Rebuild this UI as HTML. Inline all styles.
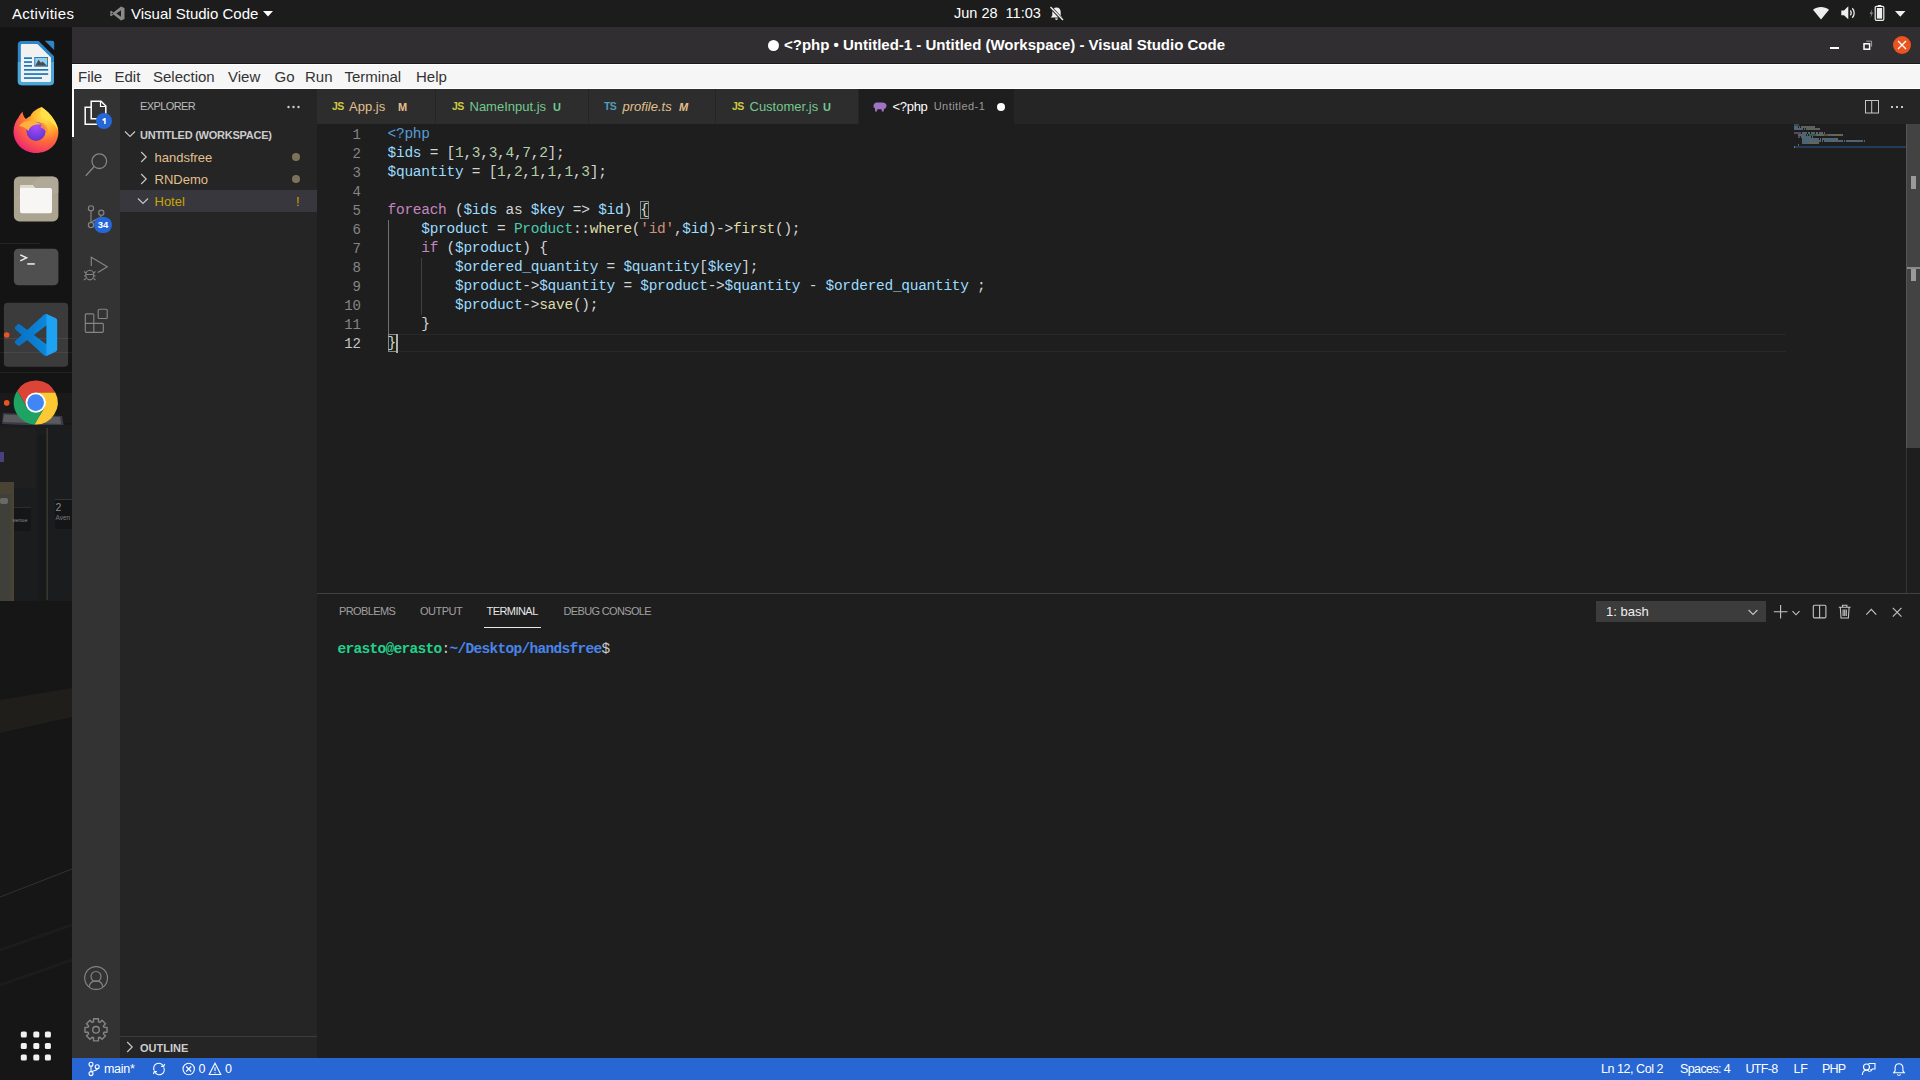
<!DOCTYPE html>
<html><head><meta charset="utf-8">
<style>
*{margin:0;padding:0;box-sizing:border-box}
html,body{width:1920px;height:1080px;overflow:hidden;background:#1e1e1e;font-family:"Liberation Sans",sans-serif}
.a{position:absolute}
.t{position:absolute;white-space:pre;line-height:1}
svg{position:absolute;overflow:visible}
#top{left:0;top:0;width:1920px;height:27px;background:#1c1c1c}
#dock{left:0;top:27px;width:72px;height:1053px;background:#151515;overflow:hidden}
#title{left:72px;top:27px;width:1848px;height:37px;background:#302e30;border-bottom:1px solid #1a1a1a}
#menu{left:72px;top:64px;width:1848px;height:25px;background:#f6f6f6;border-top:1px solid #fff;border-bottom:1px solid #fff}
#act{left:72px;top:89px;width:48px;height:969px;background:#333333}
#side{left:120px;top:89px;width:197px;height:969px;background:#252526}
#tabs{left:317px;top:89px;width:1603px;height:35px;background:#252526}
#editor{left:317px;top:124px;width:1603px;height:468px;background:#1e1e1e}
#panel{left:317px;top:593px;width:1603px;height:465px;background:#1e1e1e;border-top:1px solid #414141}
#status{left:72px;top:1058px;width:1848px;height:22px;background:#2766d3}
.tab{position:absolute;top:0;height:35px;background:#2d2d2d;border-right:1px solid #252526}
.code{position:absolute;font-family:"Liberation Mono",monospace;font-size:14.5px;letter-spacing:-0.28px;line-height:19px;white-space:pre;color:#d4d4d4}
.ln{position:absolute;font-family:"Liberation Mono",monospace;font-size:14px;line-height:19px;color:#858585;text-align:right;width:60px;white-space:pre}
.wt{color:#fff;font-size:15px}
.mn{color:#333333;font-size:15px}
.tb{font-size:13px}
.kw{color:#c586c0}.vr{color:#9cdcfe}.nm{color:#b5cea8}.fn{color:#dcdcaa}.cl{color:#4ec9b0}.st{color:#ce9178}.tg{color:#569cd6}
</style></head><body>
<!-- GNOME top bar -->
<div id="top" class="a"></div>
<div class="t wt" style="left:12px;top:6.3px;letter-spacing:0.3px">Activities</div>
<svg style="left:110px;top:6px" width="15" height="15" viewBox="0 0 15 15"><path d="M11 0.5 L14.5 2 V13 L11 14.5 L3.5 8.6 L1.3 10.3 L0.3 9.8 V5.2 L1.3 4.7 L3.5 6.4 Z M11 4.3 L6.3 7.5 L11 10.7 Z M1.8 6.2 V8.8 L3.1 7.5 Z" fill="#8a8a8a" fill-rule="evenodd"/></svg>
<div class="t wt" style="left:131px;top:6.3px">Visual Studio Code</div>
<svg style="left:263px;top:11px" width="10" height="6" viewBox="0 0 10 6"><path d="M0 0 H10 L5 5.5 Z" fill="#fff"/></svg>
<div class="t wt" style="left:954px;top:5.8px;font-size:14.5px">Jun 28  11:03</div>
<svg style="left:1049px;top:6px" width="15" height="15" viewBox="0 0 15 15"><path d="M7.5 1.5 C4.8 1.5 3.3 3.5 3.3 6 V9.5 L1.8 11.5 H13.2 L11.7 9.5 V6 C11.7 3.5 10.2 1.5 7.5 1.5 Z M6 12.6 H9 C9 13.5 8.3 14 7.5 14 C6.7 14 6 13.5 6 12.6 Z" fill="#eee"/><path d="M1 0.5 L14 14.5" stroke="#1c1c1c" stroke-width="3"/><path d="M1.5 1 L14 14" stroke="#eee" stroke-width="1.4"/></svg>
<svg style="left:1813px;top:7px" width="16" height="13" viewBox="0 0 16 13"><path d="M0 2.8 C4.5 -0.9 11.5 -0.9 16 2.8 L8 12.5 Z" fill="#eee"/></svg>
<svg style="left:1841px;top:6px" width="16" height="14" viewBox="0 0 16 14"><path d="M0.3 4.5 H3 L7.3 0.3 V13.3 L3 9.3 H0.3 Z" fill="#eee"/><path d="M9.3 4.5 C10.5 5.7 10.5 8.1 9.3 9.3" stroke="#eee" stroke-width="1.3" fill="none"/><path d="M11.3 2.2 C13.8 4.7 13.8 9.2 11.3 11.7" stroke="#eee" stroke-width="1.3" fill="none"/></svg>
<svg style="left:1869px;top:5px" width="16" height="16" viewBox="0 0 16 16"><path d="M3.3 4 L0.5 9 H2.3 L1.3 13 L4.2 7.6 H2.5 Z" fill="#888"/><rect x="6.2" y="1.3" width="8.6" height="14" rx="1.3" fill="none" stroke="#eee" stroke-width="1.2"/><rect x="8.8" y="0" width="3.5" height="1.5" fill="#eee"/><rect x="7.9" y="3" width="5.2" height="10.6" fill="#eee"/></svg>
<svg style="left:1895px;top:10.5px" width="11" height="6" viewBox="0 0 11 6"><path d="M0 0 H10.5 L5.25 5.8 Z" fill="#eee"/></svg>

<!-- Dock -->
<div id="dock" class="a">
<svg style="left:0;top:0" width="72" height="1053" viewBox="0 27 72 1053">
 <defs>
  <linearGradient id="vsg" x1="0" y1="0" x2="1" y2="0"><stop offset="0" stop-color="#0a6fc2"/><stop offset="0.7" stop-color="#0b86d8"/><stop offset="1" stop-color="#1fa0f0"/></linearGradient>
  <radialGradient id="ffg" cx="0.72" cy="0.2" r="0.95"><stop offset="0" stop-color="#ffe94a"/><stop offset="0.3" stop-color="#ffb52e"/><stop offset="0.55" stop-color="#ff6f37"/><stop offset="0.82" stop-color="#f43b62"/><stop offset="1" stop-color="#e3147f"/></radialGradient>
  <radialGradient id="ffp" cx="0.5" cy="0.25" r="0.85"><stop offset="0" stop-color="#a94dff"/><stop offset="1" stop-color="#5630c9"/></radialGradient>
  <linearGradient id="wall" x1="0" y1="0" x2="0" y2="1"><stop offset="0" stop-color="#1d2023"/><stop offset="1" stop-color="#22262a"/></linearGradient>
 </defs>
 <!-- wallpaper hints -->
 <rect x="0" y="27" width="72" height="1053" fill="#171717"/>
 <rect x="0" y="27" width="72" height="395" fill="#141414"/>
 <path d="M0 243.5 H40" stroke="#26241e" stroke-width="1"/>
 <path d="M0 338.5 H72 M0 352.5 H72 M0 372.5 H72" stroke="#24221d" stroke-width="1"/>
 <rect x="0" y="393" width="72" height="30" fill="#1a1a1a"/>
 <path d="M3 413 L62 416 L64 427 L2 424 Z" fill="#3d3a48"/>
 <path d="M4 414.5 L60 417 L61 424 L3 422 Z" fill="#5b5a5e"/>
 <rect x="0" y="425" width="72" height="176" fill="#1b1c1e"/>
 <rect x="0" y="428" width="36" height="60" fill="#1f1f20"/>
 <rect x="0" y="452" width="4" height="10" fill="#4a4080"/>
 <rect x="38" y="435" width="9" height="166" fill="#18191b"/>
 <rect x="46.5" y="428" width="1.3" height="172" fill="#4a4636" opacity="0.8"/>
 <rect x="0" y="482" width="14" height="119" fill="#4a4333"/>
 <rect x="0" y="494" width="11" height="107" fill="#3f403a"/>
 <rect x="0" y="498" width="8" height="6" rx="2" fill="#7a7c78" opacity="0.7"/>
 <rect x="14" y="507" width="17" height="24" fill="#151618"/>
 <path d="M14 507.5 H31" stroke="#444" stroke-width="0.5"/>
 <text x="12.5" y="522" font-family="Liberation Sans" font-size="5.5" fill="#8a8a8a">venue</text>
 <rect x="55" y="499" width="17" height="30" fill="#141517"/>
 <path d="M55 499.5 H72" stroke="#4a4a4a" stroke-width="0.6"/>
 <text x="55.5" y="511" font-family="Liberation Sans" font-size="10.5" fill="#8a8a8a">2</text>
 <text x="55.5" y="520" font-family="Liberation Sans" font-size="6.5" fill="#7a7a7a">Aven</text>
 <rect x="0" y="601" width="72" height="479" fill="#161616"/>
 <path d="M0 700 L72 688 V717 L0 733 Z" fill="#1f1e1a"/>
 <path d="M0 897 L72 869" stroke="#3a3a3a" stroke-width="0.8"/>
 <path d="M0 950 L72 925 M0 985 L72 960" stroke="#1c1c1c" stroke-width="3"/>
 <!-- LibreOffice Writer -->
 <path d="M21.8 41 H38.6 L54 56.2 V81.2 A4 4 0 0 1 50 85.2 H21.8 A4 4 0 0 1 17.8 81.2 V45 A4 4 0 0 1 21.8 41 Z" fill="#2c86c7"/>
 <path d="M17.8 62 V81.2 A4 4 0 0 0 21.8 85.2 H50 A4 4 0 0 0 54 81.2 V62 Z" fill="#4ba7da"/>
 <path d="M22 44 H37.4 L51 57.6 V80.5 A1.6 1.6 0 0 1 49.4 82.1 H22.5 A1.6 1.6 0 0 1 20.9 80.5 V45.1 A1.1 1.1 0 0 1 22 44 Z" fill="#f1f1f1"/>
 <path d="M44.8 40.8 H52.2 A2 2 0 0 1 54.2 42.8 V49.9 Z" fill="#2c86c7"/>
 <g fill="#1b75bb"><rect x="24" y="57.3" width="8" height="1.7"/><rect x="24" y="61.2" width="8" height="1.7"/><rect x="24" y="65" width="8" height="1.7"/><rect x="24" y="69" width="24.2" height="1.7"/><rect x="24" y="73.2" width="24.2" height="1.7"/><rect x="24" y="77.2" width="18" height="1.7"/></g>
 <rect x="34.3" y="57" width="13.7" height="9.7" fill="#1b75bb"/>
 <rect x="35.2" y="57.9" width="11.9" height="7.9" fill="#8fd0f2"/>
 <path d="M35.2 65.8 L38.5 59.8 L41 62.8 L42.5 61.5 L47.1 65.8 Z" fill="#4a4a4a"/>
 <path d="M44.6 57.9 H47.1 V60.5 Z" fill="#f3c53a"/>
 <!-- Firefox -->
 <path d="M41.5 107 C46 110 50.5 114 53.5 119 C57 124 58.5 128 58.4 132 C58.4 144.5 48.5 153 36 153 C23.5 153 13.5 143.5 13.5 131.5 C13.5 126 15.5 121 18.5 117.5 C19.5 115 21 113.5 22.5 111.5 C23 115 24 117.5 26 119 C27.5 117.5 29 116.5 30.5 116 C31.5 113 35 109.5 41.5 107 Z" fill="url(#ffg)"/>
 <path d="M41.5 107 C46 110 50.5 114 53.5 119 C56 123 57.5 127 58 130 C54 123 48 119 42 118 C40 115 40 111 41.5 107 Z" fill="#ffe24a"/>
 <circle cx="36" cy="131.3" r="9.6" fill="url(#ffp)"/>
 <path d="M19 126 C22 121.5 28 120 33 121 C37 121.8 40 123.5 42 125 C38.5 124.2 34.5 124.5 31.5 126.5 C29.5 127.8 28.8 129.5 28.5 131 C26 128 22.5 126.5 19 126 Z" fill="#ffb13b"/>
 <path d="M42 122.5 C46.5 124.5 49 129 48 135 C46.5 131 44 128.5 40.5 127.5 Z" fill="#ff9236" opacity="0.85"/>
 <!-- Files -->
 <rect x="13.9" y="176.4" width="44.5" height="45" rx="5.5" fill="#aba491"/>
 <path d="M13.9 200 L40 176.4 H52.9 A5.5 5.5 0 0 1 58.4 181.9 V193 Z" fill="#b5ae9c" opacity="0.6"/>
 <path d="M22 184.9 H32.5 L35 187.9 H50 A2 2 0 0 1 52 189.9 V211.2 A2 2 0 0 1 50 213.2 H22 A2 2 0 0 1 20 211.2 V186.9 A2 2 0 0 1 22 184.9 Z" fill="#f7f6f4"/>
 <path d="M22 184.9 H32.5 L35 187.9 H20 V186.9 A2 2 0 0 1 22 184.9 Z" fill="#deDAD0"/>
 <!-- Terminal -->
 <rect x="13.9" y="248.7" width="44.5" height="36.5" rx="4.5" fill="#4f4f4f"/>
  <path d="M20.3 254.8 L26.6 257.8 L20.3 260.8" fill="none" stroke="#f0f0f0" stroke-width="1.4"/>
 <rect x="27.3" y="263.2" width="7.5" height="1.5" fill="#f0f0f0"/>
 <!-- VS Code active -->
 <rect x="3.9" y="302.8" width="64.2" height="63.9" rx="4" fill="#ffffff" opacity="0.17"/>
 <g transform="translate(14.9 313.8) scale(0.422)">
  <path d="M96.46 10.8 L75.86 0.87 C73.48 -0.28 70.62 0.2 68.75 2.07 L29.2 38.15 L11.97 25.07 C10.37 23.85 8.12 23.95 6.63 25.31 L1.12 30.32 C-0.7 31.97 -0.7 34.83 1.11 36.48 L16.05 50.11 L1.11 63.74 C-0.7 65.39 -0.7 68.25 1.12 69.9 L6.63 74.91 C8.12 76.27 10.37 76.37 11.97 75.15 L29.2 62.07 L68.75 98.15 C70.62 100.02 73.48 100.5 75.86 99.35 L96.46 89.43 C98.62 88.39 100 86.2 100 83.79 V16.43 C100 14.03 98.62 11.84 96.46 10.8 Z M75.02 27.3 L45.02 50.11 L75.02 72.92 Z" fill="url(#vsg)" fill-rule="evenodd"/>
  <path d="M75.02 27.3 V0.6 C75.3 0.7 75.6 0.75 75.86 0.87 L96.46 10.8 C98.62 11.84 100 14.03 100 16.43 V83.79 C100 86.2 98.62 88.39 96.46 89.43 L75.86 99.35 C75.6 99.47 75.3 99.6 75.02 99.7 V72.92 Z" fill="#1fa2f2"/>
 </g>
 <circle cx="6.7" cy="335" r="2.8" fill="#e95420"/>
 <!-- Chrome -->
 <g transform="translate(35.7 402.6)">
  <path d="M0 0 L0 -10 L19.6 -10 A22 22 0 0 0 -18.46 -11.97 L-8.66 5 Z" fill="#db4437"/>
  <path d="M0 0 L0 -10 L19.6 -10 A22 22 0 0 1 -1.14 21.97 L8.66 5 Z" fill="#fcc934"/>
  <path d="M0 0 L8.66 5 L-1.14 21.97 A22 22 0 0 1 -18.46 -11.97 L-8.66 5 Z" fill="#1ea362"/>
  <circle r="10.2" fill="#fff"/>
  <circle r="8.3" fill="#4285f4"/>
 </g>
 <circle cx="6.7" cy="402.9" r="2.8" fill="#e95420"/>
 <!-- apps grid -->
 <g fill="#f2f2f2"><rect x="20.8" y="1031.4" width="6" height="6" rx="1.5"/><rect x="33.3" y="1031.4" width="6" height="6" rx="1.5"/><rect x="44.9" y="1031.4" width="6" height="6" rx="1.5"/><rect x="20.8" y="1043" width="6" height="6" rx="1.5"/><rect x="33.3" y="1043" width="6" height="6" rx="1.5"/><rect x="44.9" y="1043" width="6" height="6" rx="1.5"/><rect x="20.8" y="1054.5" width="6" height="6" rx="1.5"/><rect x="33.3" y="1054.5" width="6" height="6" rx="1.5"/><rect x="44.9" y="1054.5" width="6" height="6" rx="1.5"/></g>
</svg>
</div>

<!-- Window title bar -->
<div id="title" class="a"></div>
<div class="a" style="left:768px;top:39.5px;width:11px;height:11px;border-radius:50%;background:#fff"></div>
<div class="t wt" style="left:784px;top:37.3px;font-weight:bold">&lt;?php • Untitled-1 - Untitled (Workspace) - Visual Studio Code</div>
<div class="a" style="left:1830px;top:46.5px;width:8.5px;height:2px;background:#fff"></div>
<svg style="left:1863px;top:40px" width="10" height="10" viewBox="0 0 10 10"><rect x="1" y="3.8" width="5.6" height="5.4" fill="none" stroke="#fff" stroke-width="1.5"/><path d="M3.2 1.2 H8.6 V6.6" fill="none" stroke="#aaa" stroke-width="0.9"/></svg>
<div class="a" style="left:1892.6px;top:35.6px;width:18.8px;height:18.8px;border-radius:50%;background:#e95420"></div>
<svg style="left:1897px;top:40px" width="10" height="10" viewBox="0 0 10 10"><path d="M1 1 L9 9 M9 1 L1 9" stroke="#fff" stroke-width="1.3"/></svg>

<!-- Menu bar -->
<div id="menu" class="a"></div>
<div class="t mn" style="left:78px;top:68.6px">File</div>
<div class="t mn" style="left:114.5px;top:68.6px">Edit</div>
<div class="t mn" style="left:153px;top:68.6px">Selection</div>
<div class="t mn" style="left:228px;top:68.6px">View</div>
<div class="t mn" style="left:274.5px;top:68.6px">Go</div>
<div class="t mn" style="left:305px;top:68.6px">Run</div>
<div class="t mn" style="left:344.5px;top:68.6px">Terminal</div>
<div class="t mn" style="left:416px;top:68.6px">Help</div>

<!-- Activity bar -->
<div id="act" class="a"></div>
<div class="a" style="left:72px;top:89px;width:2px;height:48px;background:#fff"></div>
<svg style="left:72px;top:89px" width="48" height="969" viewBox="72 89 48 969">
 <g fill="none" stroke="#fff" stroke-width="1.5" stroke-linejoin="miter">
  <path d="M91.5 107.2 H85.2 V124.3 H97.8 V118.8"/>
  <path d="M91.2 101.3 H101 L105.8 106 V118.8 H91.2 Z"/>
  <path d="M100.5 101.3 V106.5 H105.8" stroke-width="1.2"/>
 </g>
 <circle cx="104" cy="121" r="8" fill="#2567d8"/>
 <g fill="none" stroke="#858585" stroke-width="1.3">
  <circle cx="99.3" cy="161.2" r="7.3"/>
  <path d="M94.2 166.5 L85.8 175.8"/>
  <circle cx="91" cy="208.3" r="2.6" stroke-width="1.15"/>
  <circle cx="101.3" cy="212.7" r="2.6" stroke-width="1.15"/>
  <circle cx="91" cy="225" r="2.6" stroke-width="1.15"/>
  <path d="M91 211 V222.4 M101.3 215.3 C101.3 219.5 94 218.5 91.8 222.6" stroke-width="1.15"/>
  <path d="M91.3 266 V257.3 L107.3 266.8 L97.8 272.6" stroke-width="1.15"/>
  <ellipse cx="89.8" cy="275" rx="4" ry="4.8" stroke-width="1.15"/>
  <path d="M84 271.5 L86 273 M84 276 H86 M84 280 L86 278.5 M95.5 271.5 L93.5 273 M95.5 276 H93.5 M95.5 280 L93.5 278.5 M86.2 274.5 H93.4" stroke-width="1.05"/>
  <path d="M86.3 313.8 H92.8 A1 1 0 0 1 93.8 314.8 V323.3 H102.3 A1 1 0 0 1 103.3 324.3 V331.3 A1 1 0 0 1 102.3 332.3 H86.3 A1 1 0 0 1 85.3 331.3 V314.8 A1 1 0 0 1 86.3 313.8 Z M85.3 323.3 H93.8 V332.3" stroke-width="1.15"/>
  <rect x="98.2" y="309.2" width="9" height="9.3" rx="1" stroke-width="1.15"/>
  <circle cx="96.1" cy="978" r="11.4" stroke-width="1.15"/>
  <circle cx="96" cy="976.5" r="5" stroke-width="1.15"/>
  <path d="M89.2 986.8 C89.8 983 92.5 980.8 96 980.8 C99.5 980.8 102.2 983 102.8 986.8" stroke-width="1.15"/>
 </g>
 <g fill="none" stroke="#858585" stroke-width="1.4" stroke-linejoin="round">
  <path d="M103.93 1027.35 L107.03 1027.33 L107.03 1032.27 L103.93 1032.25 L103.34 1033.67 L105.54 1035.85 L102.05 1039.34 L99.87 1037.14 L98.45 1037.73 L98.47 1040.83 L93.53 1040.83 L93.55 1037.73 L92.13 1037.14 L89.95 1039.34 L86.46 1035.85 L88.66 1033.67 L88.07 1032.25 L84.97 1032.27 L84.97 1027.33 L88.07 1027.35 L88.66 1025.93 L86.46 1023.75 L89.95 1020.26 L92.13 1022.46 L93.55 1021.87 L93.53 1018.77 L98.47 1018.77 L98.45 1021.87 L99.87 1022.46 L102.05 1020.26 L105.54 1023.75 L103.34 1025.93 Z"/>
  <circle cx="96" cy="1029.8" r="3.3"/>
 </g>
</svg>
<svg style="left:0;top:0" width="1" height="1"><path d="M102.3 119.6 L104.3 117.9 H105.7 V124.1 H104.2 V120.3 L103 121.1 Z" fill="#fff"/></svg>
<div class="a" style="left:94px;top:217px;width:18px;height:16px;border-radius:8px;background:#2567d8"></div>
<div class="t" style="left:94px;top:219.7px;width:18px;text-align:center;color:#fff;font-size:9.5px;font-weight:bold">34</div>

<!-- Sidebar -->
<div id="side" class="a"></div>
<div class="t" style="left:140px;top:101px;color:#bbbbbb;font-size:11px;letter-spacing:-0.6px">EXPLORER</div>
<svg style="left:287px;top:105px" width="14" height="4" viewBox="0 0 14 4"><circle cx="1.5" cy="2" r="1.2" fill="#ccc"/><circle cx="6.5" cy="2" r="1.2" fill="#ccc"/><circle cx="11.5" cy="2" r="1.2" fill="#ccc"/></svg>
<svg style="left:124px;top:130px" width="12" height="8" viewBox="0 0 12 8"><path d="M1 1.5 L6 6.5 L11 1.5" fill="none" stroke="#c5c5c5" stroke-width="1.2"/></svg>
<div class="t" style="left:140px;top:130px;color:#cccccc;font-size:11px;font-weight:bold;letter-spacing:-0.25px">UNTITLED (WORKSPACE)</div>
<svg style="left:140px;top:151px" width="8" height="12" viewBox="0 0 8 12"><path d="M1.2 1 L6.2 6 L1.2 11" fill="none" stroke="#c5c5c5" stroke-width="1.2"/></svg>
<div class="t" style="left:154.5px;top:150.8px;color:#e2c08d;font-size:13px">handsfree</div>
<div class="a" style="left:292px;top:153px;width:8px;height:8px;border-radius:50%;background:#7d7259"></div>
<svg style="left:140px;top:173px" width="8" height="12" viewBox="0 0 8 12"><path d="M1.2 1 L6.2 6 L1.2 11" fill="none" stroke="#c5c5c5" stroke-width="1.2"/></svg>
<div class="t" style="left:154.5px;top:172.5px;color:#e2c08d;font-size:13px">RNDemo</div>
<div class="a" style="left:292px;top:175px;width:8px;height:8px;border-radius:50%;background:#7d7259"></div>
<div class="a" style="left:120px;top:190px;width:197px;height:22px;background:#37373d"></div>
<svg style="left:137px;top:197px" width="12" height="8" viewBox="0 0 12 8"><path d="M1 1.5 L6 6.5 L11 1.5" fill="none" stroke="#c5c5c5" stroke-width="1.2"/></svg>
<div class="t" style="left:154.5px;top:194.5px;color:#c8a600;font-size:13px">Hotel</div>
<div class="t" style="left:296px;top:194.5px;color:#c8a600;font-size:13px">!</div>
<div class="a" style="left:120px;top:1036px;width:197px;height:1px;background:#3c3c3c"></div>
<svg style="left:126px;top:1041px" width="8" height="12" viewBox="0 0 8 12"><path d="M1.2 1 L6.2 6 L1.2 11" fill="none" stroke="#c5c5c5" stroke-width="1.2"/></svg>
<div class="t" style="left:140px;top:1042.8px;color:#cccccc;font-size:11px;font-weight:bold">OUTLINE</div>

<!-- Tabs -->
<div id="tabs" class="a">
  <div class="tab" style="left:0;width:119px"></div>
  <div class="tab" style="left:119px;width:153px"></div>
  <div class="tab" style="left:272px;width:127px"></div>
  <div class="tab" style="left:399px;width:143px"></div>
  <div class="tab" style="left:542px;width:156px;background:#1e1e1e"></div>
</div>
<div class="t" style="left:332px;top:101.3px;color:#cbcb41;font-size:10.5px;font-weight:bold;letter-spacing:-0.7px">JS</div>
<div class="t tb" style="left:349px;top:100px;color:#e2c08d">App.js</div>
<div class="t tb" style="left:398px;top:101.7px;color:#e2c08d;font-size:11px;font-weight:bold">M</div>
<div class="t" style="left:452px;top:101.3px;color:#cbcb41;font-size:10.5px;font-weight:bold;letter-spacing:-0.7px">JS</div>
<div class="t tb" style="left:469.5px;top:100px;color:#73c991">NameInput.js</div>
<div class="t tb" style="left:553px;top:101.7px;color:#73c991;font-size:11px;font-weight:bold">U</div>
<div class="t" style="left:604px;top:101.3px;color:#519aba;font-size:10.5px;font-weight:bold;letter-spacing:-0.7px">TS</div>
<div class="t tb" style="left:622.5px;top:100px;color:#e2c08d;font-style:italic">profile.ts</div>
<div class="t tb" style="left:679px;top:101.7px;color:#e2c08d;font-size:11px;font-weight:bold;font-style:italic">M</div>
<div class="t" style="left:732px;top:101.3px;color:#cbcb41;font-size:10.5px;font-weight:bold;letter-spacing:-0.7px">JS</div>
<div class="t tb" style="left:749.5px;top:100px;color:#73c991">Customer.js</div>
<div class="t tb" style="left:823px;top:101.7px;color:#73c991;font-size:11px;font-weight:bold">U</div>
<svg style="left:873px;top:101.5px" width="14" height="10" viewBox="0 0 14 10"><path d="M4 0.5 C1.5 0.5 0.3 2.5 0.5 4.5 C0.7 6 1.5 6.3 1.8 5.5 L2.2 9.5 H4 L4.3 7.3 H8.5 L8.8 9.5 H10.7 L11 7 C12.5 6.5 13.5 5.2 13.5 3.8 C13.5 1.5 11.5 0.5 9 0.5 Z" fill="#a074c4"/></svg>
<div class="t tb" style="left:892.5px;top:99.8px;color:#ffffff;letter-spacing:-0.3px">&lt;?php</div>
<div class="t" style="left:933.7px;top:100.8px;color:#9a9a9a;font-size:11px;letter-spacing:0.45px">Untitled-1</div>
<div class="a" style="left:996.5px;top:102.7px;width:8.6px;height:8.6px;border-radius:50%;background:#fff"></div>
<svg style="left:1865px;top:100px" width="14" height="14" viewBox="0 0 14 14"><rect x="0.5" y="0.5" width="13" height="12.5" fill="none" stroke="#c5c5c5" stroke-width="1"/><path d="M6.7 0.5 V13" stroke="#c5c5c5" stroke-width="1"/></svg>
<svg style="left:1890px;top:106px" width="14" height="3" viewBox="0 0 14 3"><rect x="1" y="0" width="2" height="2" fill="#c5c5c5"/><rect x="6" y="0" width="2" height="2" fill="#c5c5c5"/><rect x="11" y="0" width="2" height="2" fill="#c5c5c5"/></svg>

<!-- Editor -->
<div id="editor" class="a"></div>
<div class="a" style="left:388px;top:334px;width:1398px;height:18px;border-top:1px solid #282828;border-bottom:1px solid #282828"></div>
<div class="a" style="left:388px;top:220px;width:1px;height:114px;background:#707070"></div>
<div class="a" style="left:421px;top:258px;width:1px;height:57px;background:#404040"></div>
<div class="a" style="left:640px;top:201px;width:9px;height:18px;border:1px solid #888;background:rgba(0,100,0,0.1)"></div>
<div class="a" style="left:388px;top:334px;width:9px;height:18px;border:1px solid #888;background:rgba(0,100,0,0.1)"></div>
<div class="ln" style="left:301px;top:125.8px">1
2
3
4
5
6
7
8
9
10
11</div>
<div class="ln" style="left:301px;top:334.8px;color:#c6c6c6">12</div>
<div class="code" style="left:387.6px;top:124.9px"><span class="tg">&lt;?php</span>
<span class="vr">$ids</span> = [<span class="nm">1</span>,<span class="nm">3</span>,<span class="nm">3</span>,<span class="nm">4</span>,<span class="nm">7</span>,<span class="nm">2</span>];
<span class="vr">$quantity</span> = [<span class="nm">1</span>,<span class="nm">2</span>,<span class="nm">1</span>,<span class="nm">1</span>,<span class="nm">1</span>,<span class="nm">3</span>];

<span class="kw">foreach</span> (<span class="vr">$ids</span> as <span class="vr">$key</span> =&gt; <span class="vr">$id</span>) {
    <span class="vr">$product</span> = <span class="cl">Product</span>::<span class="fn">where</span>(<span class="st">'id'</span>,<span class="vr">$id</span>)-&gt;<span class="fn">first</span>();
    <span class="kw">if</span> (<span class="vr">$product</span>) {
        <span class="vr">$ordered_quantity</span> = <span class="vr">$quantity</span>[<span class="vr">$key</span>];
        <span class="vr">$product</span>-&gt;<span class="vr">$quantity</span> = <span class="vr">$product</span>-&gt;<span class="vr">$quantity</span> - <span class="vr">$ordered_quantity</span> ;
        <span class="vr">$product</span>-&gt;<span class="fn">save</span>();
    }
}</div>
<div class="a" style="left:396px;top:334px;width:2px;height:19px;background:#aeafad"></div>
<svg style="left:1794px;top:124px" width="112" height="26" viewBox="1794 124 112 26"><rect x="1794" y="146" width="112" height="2" fill="#264f78" opacity="0.65"/><g opacity="0.38"><rect x="1794" y="124" width="5" height="2" fill="#569cd6"/><rect x="1794" y="126" width="4" height="2" fill="#9cdcfe"/><rect x="1799" y="126" width="1" height="2" fill="#d4d4d4"/><rect x="1801" y="126" width="1" height="2" fill="#d4d4d4"/><rect x="1802" y="126" width="1" height="2" fill="#b5cea8"/><rect x="1803" y="126" width="1" height="2" fill="#d4d4d4"/><rect x="1804" y="126" width="1" height="2" fill="#b5cea8"/><rect x="1805" y="126" width="1" height="2" fill="#d4d4d4"/><rect x="1806" y="126" width="1" height="2" fill="#b5cea8"/><rect x="1807" y="126" width="1" height="2" fill="#d4d4d4"/><rect x="1808" y="126" width="1" height="2" fill="#b5cea8"/><rect x="1809" y="126" width="1" height="2" fill="#d4d4d4"/><rect x="1810" y="126" width="1" height="2" fill="#b5cea8"/><rect x="1811" y="126" width="1" height="2" fill="#d4d4d4"/><rect x="1812" y="126" width="1" height="2" fill="#b5cea8"/><rect x="1813" y="126" width="2" height="2" fill="#d4d4d4"/><rect x="1794" y="128" width="9" height="2" fill="#9cdcfe"/><rect x="1804" y="128" width="1" height="2" fill="#d4d4d4"/><rect x="1806" y="128" width="1" height="2" fill="#d4d4d4"/><rect x="1807" y="128" width="1" height="2" fill="#b5cea8"/><rect x="1808" y="128" width="1" height="2" fill="#d4d4d4"/><rect x="1809" y="128" width="1" height="2" fill="#b5cea8"/><rect x="1810" y="128" width="1" height="2" fill="#d4d4d4"/><rect x="1811" y="128" width="1" height="2" fill="#b5cea8"/><rect x="1812" y="128" width="1" height="2" fill="#d4d4d4"/><rect x="1813" y="128" width="1" height="2" fill="#b5cea8"/><rect x="1814" y="128" width="1" height="2" fill="#d4d4d4"/><rect x="1815" y="128" width="1" height="2" fill="#b5cea8"/><rect x="1816" y="128" width="1" height="2" fill="#d4d4d4"/><rect x="1817" y="128" width="1" height="2" fill="#b5cea8"/><rect x="1818" y="128" width="2" height="2" fill="#d4d4d4"/><rect x="1794" y="132" width="7" height="2" fill="#c586c0"/><rect x="1802" y="132" width="1" height="2" fill="#d4d4d4"/><rect x="1803" y="132" width="4" height="2" fill="#9cdcfe"/><rect x="1808" y="132" width="2" height="2" fill="#d4d4d4"/><rect x="1811" y="132" width="4" height="2" fill="#9cdcfe"/><rect x="1816" y="132" width="2" height="2" fill="#d4d4d4"/><rect x="1819" y="132" width="3" height="2" fill="#9cdcfe"/><rect x="1822" y="132" width="1" height="2" fill="#d4d4d4"/><rect x="1824" y="132" width="1" height="2" fill="#d4d4d4"/><rect x="1798" y="134" width="8" height="2" fill="#9cdcfe"/><rect x="1807" y="134" width="1" height="2" fill="#d4d4d4"/><rect x="1809" y="134" width="7" height="2" fill="#4ec9b0"/><rect x="1816" y="134" width="2" height="2" fill="#d4d4d4"/><rect x="1818" y="134" width="5" height="2" fill="#dcdcaa"/><rect x="1823" y="134" width="1" height="2" fill="#d4d4d4"/><rect x="1824" y="134" width="4" height="2" fill="#ce9178"/><rect x="1828" y="134" width="1" height="2" fill="#d4d4d4"/><rect x="1829" y="134" width="3" height="2" fill="#9cdcfe"/><rect x="1832" y="134" width="3" height="2" fill="#d4d4d4"/><rect x="1835" y="134" width="5" height="2" fill="#dcdcaa"/><rect x="1840" y="134" width="3" height="2" fill="#d4d4d4"/><rect x="1798" y="136" width="2" height="2" fill="#c586c0"/><rect x="1801" y="136" width="1" height="2" fill="#d4d4d4"/><rect x="1802" y="136" width="8" height="2" fill="#9cdcfe"/><rect x="1810" y="136" width="1" height="2" fill="#d4d4d4"/><rect x="1812" y="136" width="1" height="2" fill="#d4d4d4"/><rect x="1802" y="138" width="17" height="2" fill="#9cdcfe"/><rect x="1820" y="138" width="1" height="2" fill="#d4d4d4"/><rect x="1822" y="138" width="9" height="2" fill="#9cdcfe"/><rect x="1831" y="138" width="1" height="2" fill="#d4d4d4"/><rect x="1832" y="138" width="4" height="2" fill="#9cdcfe"/><rect x="1836" y="138" width="2" height="2" fill="#d4d4d4"/><rect x="1802" y="140" width="8" height="2" fill="#9cdcfe"/><rect x="1810" y="140" width="2" height="2" fill="#d4d4d4"/><rect x="1812" y="140" width="9" height="2" fill="#9cdcfe"/><rect x="1822" y="140" width="1" height="2" fill="#d4d4d4"/><rect x="1824" y="140" width="8" height="2" fill="#9cdcfe"/><rect x="1832" y="140" width="2" height="2" fill="#d4d4d4"/><rect x="1834" y="140" width="9" height="2" fill="#9cdcfe"/><rect x="1844" y="140" width="1" height="2" fill="#d4d4d4"/><rect x="1846" y="140" width="17" height="2" fill="#9cdcfe"/><rect x="1864" y="140" width="1" height="2" fill="#d4d4d4"/><rect x="1802" y="142" width="8" height="2" fill="#9cdcfe"/><rect x="1810" y="142" width="2" height="2" fill="#d4d4d4"/><rect x="1812" y="142" width="4" height="2" fill="#dcdcaa"/><rect x="1816" y="142" width="3" height="2" fill="#d4d4d4"/><rect x="1798" y="144" width="1" height="2" fill="#d4d4d4"/><rect x="1794" y="146" width="1" height="2" fill="#d4d4d4"/></g></svg>
<div class="a" style="left:1906px;top:124px;width:14px;height:324px;background:#434343;border-left:1px solid #555"></div>
<div class="a" style="left:1906px;top:448px;width:1px;height:145px;background:#353535"></div>
<div class="a" style="left:1911px;top:176px;width:5px;height:13px;background:#9a9a9a"></div>
<div class="a" style="left:1907px;top:267px;width:13px;height:2px;background:#8a8a8a"></div>
<div class="a" style="left:1911px;top:269px;width:5px;height:12px;background:#9a9a9a"></div>

<!-- Panel -->
<div id="panel" class="a"></div>
<div class="t" style="left:339px;top:605.7px;color:#a0a0a0;font-size:11px;letter-spacing:-0.6px">PROBLEMS</div>
<div class="t" style="left:420px;top:605.7px;color:#a0a0a0;font-size:11px;letter-spacing:-0.5px">OUTPUT</div>
<div class="t" style="left:486.5px;top:605.7px;color:#e7e7e7;font-size:11px;letter-spacing:-0.55px">TERMINAL</div>
<div class="t" style="left:563.5px;top:605.7px;color:#a0a0a0;font-size:11px;letter-spacing:-0.65px">DEBUG CONSOLE</div>
<div class="a" style="left:484px;top:626.5px;width:57px;height:1.5px;background:#e7e7e7"></div>
<div class="t" style="left:337.5px;top:642.2px;font-family:'Liberation Mono',monospace;font-size:14.5px;letter-spacing:-0.7px;font-weight:bold"><span style="color:#23d18b">erasto@erasto</span><span style="color:#cccccc;font-weight:normal">:</span><span style="color:#4a84ea">~/Desktop/handsfree</span><span style="color:#cccccc;font-weight:normal">$</span></div>
<div class="a" style="left:1596px;top:601px;width:170px;height:21px;background:#3c3c3c"></div>
<div class="t" style="left:1606px;top:604.6px;color:#f0f0f0;font-size:13px">1: bash</div>
<svg style="left:1748px;top:609px" width="10" height="7" viewBox="0 0 10 7"><path d="M0.6 1 L5 5.5 L9.4 1" fill="none" stroke="#c5c5c5" stroke-width="1.1"/></svg>
<svg style="left:1773px;top:604px" width="50" height="16" viewBox="0 0 50 16" fill="none" stroke="#c5c5c5" stroke-width="1.1">
 <path d="M7.6 1 V14.5 M0.8 7.7 H14.4"/>
 <path d="M19.5 7.2 L23 10.8 L26.5 7.2"/>
 <rect x="40.3" y="1.3" width="12.6" height="12.6" rx="1.2"/>
 <path d="M46.6 1.3 V13.9"/>
</svg>
<svg style="left:1838px;top:604px" width="70" height="16" viewBox="0 0 70 16" fill="none" stroke="#c5c5c5" stroke-width="1.1">
 <path d="M0.8 3.3 H12.6 M4.5 3.3 V1.3 H8.9 V3.3 M2.3 3.3 L3 14 H10.4 L11.1 3.3 M5.1 5.5 V12 M6.7 5.5 V12 M8.3 5.5 V12"/>
 <path d="M28.3 10.6 L33.3 5.4 L38.3 10.6"/>
 <path d="M54.8 3.9 L63.5 12.6 M63.5 3.9 L54.8 12.6"/>
</svg>

<!-- Status bar -->
<div id="status" class="a"></div>
<svg style="left:72px;top:1058px" width="200" height="22" viewBox="72 1058 200 22" fill="none" stroke="#fff" stroke-width="1.1">
 <circle cx="91" cy="1064.3" r="2"/>
 <circle cx="97.2" cy="1066.8" r="2"/>
 <circle cx="91" cy="1073.6" r="2"/>
 <path d="M91 1066.3 V1071.6 M97.2 1068.8 C97.2 1071 93 1070.5 91.5 1071.8"/>
 <path d="M154.2 1070.5 A5 5 0 0 1 163.2 1066"/>
 <path d="M163.8 1067.5 A5 5 0 0 1 154.8 1072"/>
 <path d="M161 1066.3 L163.6 1066.6 L164.6 1064" />
 <path d="M157 1071.7 L154.4 1071.4 L153.4 1074" />
 <circle cx="188.7" cy="1069" r="5.7"/>
 <path d="M186.2 1066.5 L191.2 1071.5 M191.2 1066.5 L186.2 1071.5"/>
 <path d="M215 1063.2 L220.8 1074.5 H209.2 Z"/>
 <path d="M215 1067.2 V1071 M215 1072.3 V1073.3"/>
</svg>
<div class="t" style="left:104px;top:1063px;color:#fff;font-size:12.5px;letter-spacing:-0.3px">main*</div>
<div class="t" style="left:198.5px;top:1063px;color:#fff;font-size:12.5px">0</div>
<div class="t" style="left:225px;top:1063px;color:#fff;font-size:12.5px">0</div>
<div class="t" style="left:1601px;top:1063px;color:#fff;font-size:12.5px;letter-spacing:-0.45px">Ln 12, Col 2</div>
<div class="t" style="left:1680px;top:1063px;color:#fff;font-size:12.5px;letter-spacing:-0.6px">Spaces: 4</div>
<div class="t" style="left:1745.5px;top:1063px;color:#fff;font-size:12.5px;letter-spacing:-0.7px">UTF-8</div>
<div class="t" style="left:1793.5px;top:1063px;color:#fff;font-size:12.5px;letter-spacing:-0.3px">LF</div>
<div class="t" style="left:1822px;top:1063px;color:#fff;font-size:12.5px;letter-spacing:-0.8px">PHP</div>
<svg style="left:1860px;top:1062px" width="50" height="16" viewBox="0 0 50 16" fill="none" stroke="#fff" stroke-width="1.1">
 <circle cx="6.5" cy="5" r="3"/>
 <path d="M2.3 13 C2.5 10 4.5 8.3 6.5 8.3 C8 8.3 9 9 9.6 9.8"/>
 <path d="M8.5 1.5 H15 V7 H12.5 L11 8.8 V7"/>
 <path d="M33.6 10.8 H44.4 L42.9 8.8 V5.9 C42.9 3.3 41.3 1.7 39 1.7 C36.7 1.7 35.1 3.3 35.1 5.9 V8.8 Z M37.4 12.3 C37.8 13.6 40.2 13.6 40.6 12.3"/>
</svg>
</body></html>
